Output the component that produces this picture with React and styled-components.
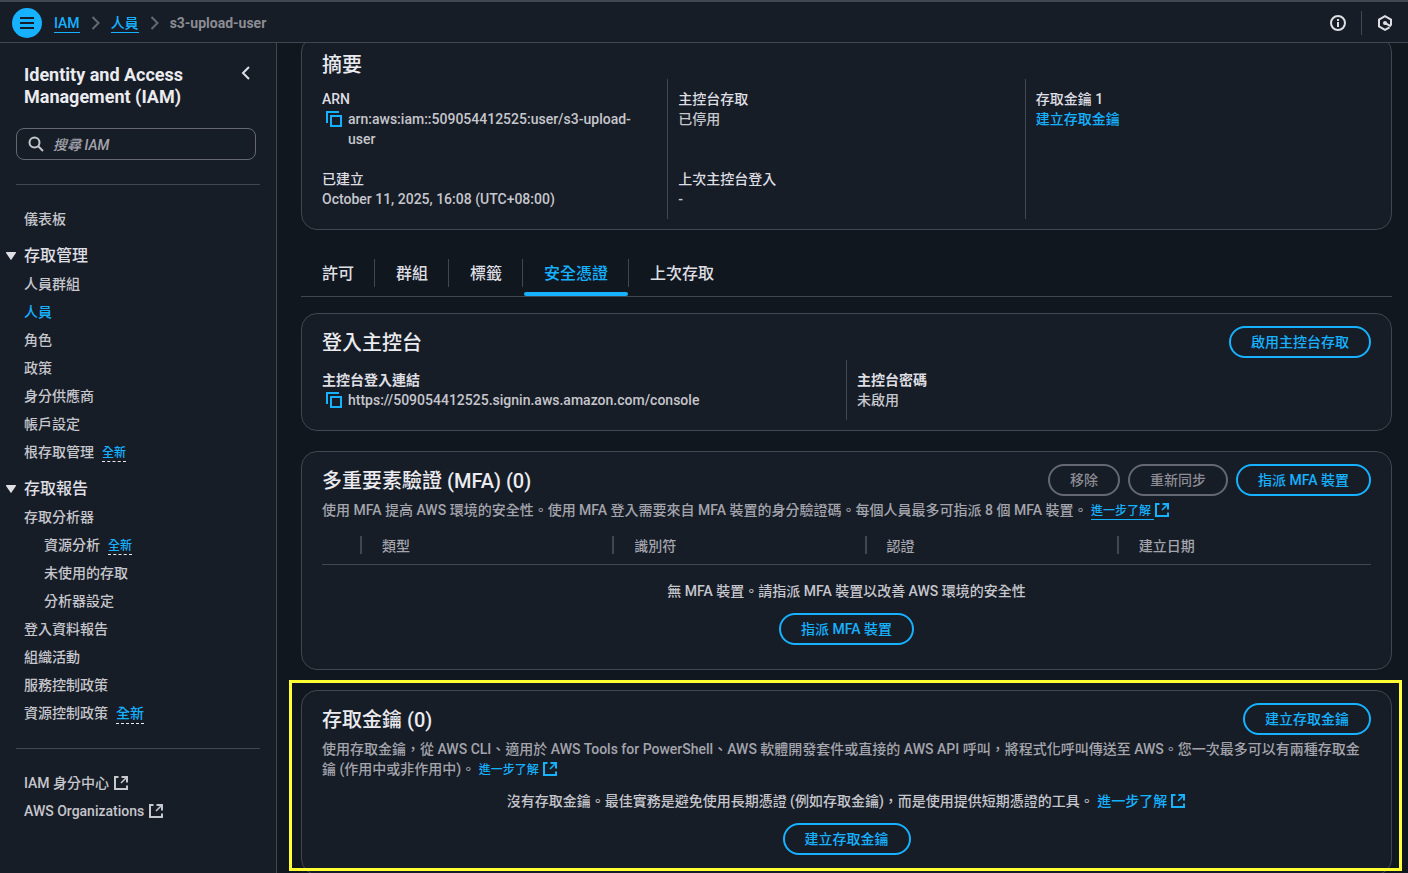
import React from 'react';
import styled, { createGlobalStyle } from 'styled-components';

const color = {
  page: '#10171e',
  surface: '#161d26',
  line: '#424650',
  control: '#656871',
  link: '#16b1ff',
  heading: '#ebebf0',
  label: '#dedee3',
  body: '#c6c6cd',
  muted: '#a4a4ad',
  disabled: '#8c8c94',
  highlight: '#ffff33',
};

const GlobalStyle = createGlobalStyle`
  *, *::before, *::after { box-sizing: border-box; }
  body {
    margin: 0;
    background: ${color.page};
    color: ${color.body};
    font: 500 14px/20px Roboto, "Noto Sans CJK TC", sans-serif;
  }
  button, input { font: inherit; }
`;

const Shell = styled.div`
  display: grid;
  grid-template: auto minmax(0, 1fr) / 277px minmax(0, 1fr);
  height: 100vh;
`;

const TopBar = styled.header`
  grid-column: 1 / -1;
  z-index: 1;
  display: flex;
  align-items: center;
  justify-content: space-between;
  height: 43px;
  padding: 2px 15px 0 12px;
  border-top: 2px solid ${color.line};
  border-bottom: 1px solid ${color.line};
  background: ${color.surface};
`;

const BarGroup = styled.div`
  display: flex;
  align-items: center;
  gap: ${(p) => p.$gap};
`;

const MenuButton = styled.button`
  display: grid;
  place-items: center;
  width: 30px;
  height: 30px;
  padding: 0;
  border: 0;
  border-radius: 50%;
  background: ${color.link};
  color: ${color.surface};
`;

const IconButton = styled.button`
  display: grid;
  place-items: center;
  flex: none;
  width: 16px;
  height: 16px;
  padding: 0;
  border: 0;
  background: none;
  color: ${(p) => (p.$accent ? color.link : color.label)};
`;

const BarRule = styled.span`
  width: 1px;
  height: 24px;
  background: ${color.line};
`;

const Crumbs = styled.ol`
  display: flex;
  align-items: center;
  gap: 11px;
  margin: 0;
  padding: 0;
  list-style: none;
  color: ${color.disabled};
`;

const Crumb = styled.li`
  display: flex;
  align-items: center;
  gap: 11px;
  font-weight: ${(p) => (p.$current ? 700 : 500)};
`;

const CrumbLink = styled.a`
  padding-top: 1px;
  border-bottom: 1px solid ${color.link};
  color: ${color.link};
  line-height: 18px;
  text-decoration: none;
`;

const Sidebar = styled.nav`
  padding: 21px 16px 20px;
  border-right: 1px solid ${color.line};
  background: ${color.surface};
  overflow: hidden;
`;

const SideHeader = styled.div`
  display: flex;
  justify-content: space-between;
  align-items: flex-start;
  gap: 40px;
  margin-bottom: 20px;
  padding: 0 6px 0 8px;
`;

const SideTitle = styled.h2`
  margin: 0;
  color: ${color.heading};
  font-size: 18px;
  font-weight: 700;
  line-height: 22px;
`;

const SearchBox = styled.label`
  display: flex;
  align-items: center;
  gap: 9px;
  height: 32px;
  margin-right: 4px;
  padding: 0 11px;
  border: 1px solid ${color.control};
  border-radius: 8px;
  color: ${color.body};
`;

const SearchInput = styled.input`
  flex: 1;
  min-width: 0;
  padding: 2px 0 0;
  border: 0;
  outline: 0;
  background: none;
  color: ${color.body};
  &::placeholder {
    color: ${color.muted};
    font-style: italic;
    opacity: 1;
  }
`;

const SideRule = styled.hr`
  height: 1px;
  margin: ${(p) => (p.$first ? '24px' : '21px')} 0 20px;
  border: 0;
  background: ${color.line};
`;

const NavList = styled.ul`
  margin: 0;
  padding: 0 0 0 ${(p) => (p.$nested ? '20px' : '8px')};
  list-style: none;
`;

const NavItem = styled.li`
  display: flex;
  align-items: center;
  gap: 8px;
  height: 28px;
`;

const NavLink = styled.a`
  display: inline-flex;
  align-items: center;
  gap: 4px;
  color: ${(p) => (p.$active ? color.link : color.body)};
  text-decoration: none;
`;

const NewTag = styled.a`
  padding-top: ${(p) => (p.$large ? '0' : '3px')};
  border-bottom: 1px dashed ${color.heading};
  color: ${color.link};
  font-size: ${(p) => (p.$large ? '14px' : '12px')};
  line-height: ${(p) => (p.$large ? '20px' : '16px')};
  text-decoration: none;
`;

const NavSection = styled.button`
  display: flex;
  align-items: center;
  gap: 8px;
  margin: 12px 0 3px -10px;
  padding: 0;
  border: 0;
  background: none;
  color: ${color.label};
  font-size: 16px;
  line-height: 22px;
`;

const Main = styled.main`
  padding: 0 16px 0 24px;
  overflow-y: auto;
  scrollbar-width: none;
`;

const Card = styled.section`
  position: relative;
  margin: ${(p) => p.$margin || '0 0 20px'};
  border: 1px solid ${color.line};
  border-radius: 16px;
  padding: 12px 20px ${(p) => p.$bottom || '10px'};
  background: ${color.surface};
`;

const CardHeader = styled.div`
  display: flex;
  align-items: center;
  justify-content: space-between;
  min-height: ${(p) => (p.$compact ? '30px' : '32px')};
  margin-bottom: ${(p) => p.$gap || '0'};
`;

const CardTitle = styled.h2`
  margin: 0;
  padding-top: 2px;
  color: ${color.heading};
  font-size: 20px;
  font-weight: 500;
  line-height: 24px;
`;

const Actions = styled.div`
  display: flex;
  gap: 8px;
`;

const PillButton = styled.button`
  height: 32px;
  padding: 0 20px;
  border: 2px solid ${color.link};
  border-radius: 20px;
  background: none;
  color: ${color.link};
  line-height: 20px;
  white-space: nowrap;
  &:disabled {
    border-color: ${color.control};
    color: ${color.disabled};
  }
`;

const Columns = styled.div`
  display: grid;
  grid-template-columns: repeat(${(p) => p.$count}, minmax(0, 1fr));
  margin: 0 -11px 0 -12px;
`;

const Column = styled.dl`
  display: flex;
  flex-direction: column;
  gap: 20px;
  margin: 0;
  padding: 10px 20px 10px 10px;
  border-left: 1px solid ${color.line};
  &:first-child {
    padding-left: 11px;
    border-color: transparent;
  }
`;

const Field = styled.div`
  min-height: ${(p) => (p.$tall ? '60px' : '40px')};
`;

const Term = styled.dt`
  color: ${color.label};
  font-weight: ${(p) => (p.$strong ? 700 : 500)};
`;

const Value = styled.dd`
  display: flex;
  gap: 6px;
  margin: 0;
  padding-left: ${(p) => (p.$copy ? '4px' : '0')};
`;

const CopyButton = styled(IconButton)`
  margin-top: 2px;
`;

const Link = styled.a`
  color: ${color.link};
  font-size: ${(p) => (p.$small ? '12px' : '14px')};
  line-height: ${(p) => (p.$small ? '16px' : '20px')};
  text-decoration: none;
  white-space: nowrap;
  svg {
    margin-top: 2px;
    vertical-align: top;
  }
`;

const LinkText = styled.span`
  padding-right: 3px;
  padding-bottom: 1px;
  border-bottom: ${(p) => (p.$underlined ? `1px solid ${color.link}` : '0')};
`;

const Tabs = styled.div`
  display: flex;
  margin-bottom: 16px;
  border-bottom: 1px solid ${color.line};
`;

const Tab = styled.button`
  position: relative;
  height: 46px;
  padding: 2px 21px 0;
  border: 0;
  background: none;
  color: ${(p) => (p.$active ? color.link : color.label)};
  font-size: 16px;
  &:not(:last-child)::after {
    content: '';
    position: absolute;
    top: 9px;
    right: 0;
    width: 1px;
    height: 28px;
    background: ${color.line};
  }
  &::before {
    content: '';
    display: ${(p) => (p.$active ? 'block' : 'none')};
    position: absolute;
    left: 1px;
    right: 1px;
    bottom: 0;
    height: 4px;
    border-radius: 2px;
    background: ${color.link};
  }
`;

const Description = styled.p`
  margin: 0;
  color: ${color.muted};
`;

const Table = styled.table`
  width: 100%;
  margin-top: 7px;
  border-collapse: collapse;
  table-layout: fixed;
`;

const HeadCell = styled.th`
  width: ${(p) => (p.$select ? '40px' : 'auto')};
  height: 37px;
  padding: 0;
  border-bottom: 1px solid ${color.line};
  color: ${color.muted};
  font-weight: 500;
  text-align: left;
`;

const HeadLabel = styled.span`
  display: block;
  height: 18px;
  padding-left: 20px;
  border-right: ${(p) => (p.$last ? '0' : `2px solid ${color.line}`)};
  line-height: 20px;
`;

const Empty = styled.div`
  display: flex;
  flex-direction: column;
  align-items: center;
  gap: 12px;
  padding-top: ${(p) => p.$top};
  color: ${color.body};
  text-align: center;
`;

const EmptyCell = styled.td`
  padding: 0;
`;

const Highlight = styled.div`
  position: absolute;
  inset: -11px -11px 3px -13px;
  border: 3px solid ${color.highlight};
  pointer-events: none;
`;

const Icon = ({ size = 16, width = 2, children }) => (
  <svg width={size} height={size} viewBox="0 0 16 16" fill="none" stroke="currentColor" strokeWidth={width} aria-hidden="true">
    {children}
  </svg>
);

const ExternalIcon = () => (
  <Icon>
    <path d="M5.500 2H2v12h12v-3.500" />
    <path d="M8.500 2H14v5.500" />
    <path d="M13.500 2.500 8 8" strokeWidth="1.600" />
  </Icon>
);

const CopyIcon = () => (
  <Icon>
    <path d="M1 12V1h12" />
    <path d="M5 5h10v10H5z" />
  </Icon>
);

const Caret = () => (
  <svg width="10" height="8" viewBox="0 0 10 8" fill="currentColor" aria-hidden="true">
    <path d="M.6 0h8.800a.6.6 0 0 1 .5.900L5.500 7.600a.6.6 0 0 1-1 0L.1.900A.6.6 0 0 1 .6 0z" />
  </svg>
);

const Chevron = () => (
  <svg width="9" height="14" viewBox="0 0 9 14" fill="none" stroke={color.control} strokeWidth="2" aria-hidden="true">
    <path d="M1.500 1 7.500 7l-6 6" />
  </svg>
);

const LearnMore = ({ small, underlined }) => (
  <Link href="#learn" $small={small}>
    <LinkText $underlined={underlined}>進一步了解</LinkText>
    <ExternalIcon />
  </Link>
);

const NavRow = ({ label, active, tag, external }) => (
  <NavItem>
    <NavLink href="#nav" $active={active}>
      {label}
      {external && <ExternalIcon />}
    </NavLink>
    {tag && <NewTag href="#new" $large={tag === 'large'}>全新</NewTag>}
  </NavItem>
);

const Section = ({ title, children }) => (
  <>
    <NavSection type="button" aria-expanded="true">
      <Caret />
      {title}
    </NavSection>
    {children}
  </>
);

const CopyValue = ({ children }) => (
  <Value $copy>
    <CopyButton type="button" aria-label="複製" $accent>
      <CopyIcon />
    </CopyButton>
    <span>{children}</span>
  </Value>
);

const tabs = ['許可', '群組', '標籤', '安全憑證', '上次存取'];
const mfaColumns = ['類型', '識別符', '認證', '建立日期'];

export default function App() {
  return (
    <Shell lang="zh-TW">
      <GlobalStyle />
      <TopBar>
        <BarGroup $gap="12px">
          <MenuButton type="button" aria-label="選單">
            <Icon>
              <path d="M1 3h14M1 8h14M1 13h14" />
            </Icon>
          </MenuButton>
          <Crumbs>
            <Crumb><CrumbLink href="#iam">IAM</CrumbLink><Chevron /></Crumb>
            <Crumb><CrumbLink href="#users">人員</CrumbLink><Chevron /></Crumb>
            <Crumb $current>s3-upload-user</Crumb>
          </Crumbs>
        </BarGroup>
        <BarGroup $gap="15px">
          <IconButton type="button" aria-label="資訊">
            <Icon>
              <circle cx="8" cy="8" r="7" />
              <path d="M8 7v5M8 4v2" />
            </Icon>
          </IconButton>
          <BarRule />
          <IconButton type="button" aria-label="CloudShell">
            <Icon>
              <path d="M14 10.500v-6L8 1.200 2 4.500v7l6 3.300 4.500-2.500" />
              <circle cx="8" cy="8" r="2" fill="currentColor" stroke="none" />
              <path d="m8 8 6 3.300" />
            </Icon>
          </IconButton>
        </BarGroup>
      </TopBar>

      <Sidebar>
        <SideHeader>
          <SideTitle>Identity and Access Management (IAM)</SideTitle>
          <IconButton type="button" aria-label="收合">
            <Icon><path d="M11 3 5 9l6 6" /></Icon>
          </IconButton>
        </SideHeader>
        <SearchBox>
          <Icon>
            <circle cx="6.500" cy="6.500" r="5" />
            <path d="m10 10 5 5" />
          </Icon>
          <SearchInput type="search" placeholder="搜尋 IAM" aria-label="搜尋 IAM" />
        </SearchBox>
        <SideRule $first />
        <NavList><NavRow label="儀表板" /></NavList>
        <Section title="存取管理">
          <NavList>
            <NavRow label="人員群組" />
            <NavRow label="人員" active />
            <NavRow label="角色" />
            <NavRow label="政策" />
            <NavRow label="身分供應商" />
            <NavRow label="帳戶設定" />
            <NavRow label="根存取管理" tag="small" />
          </NavList>
        </Section>
        <Section title="存取報告">
          <NavList>
            <NavRow label="存取分析器" />
            <li>
              <NavList $nested>
                <NavRow label="資源分析" tag="small" />
                <NavRow label="未使用的存取" />
                <NavRow label="分析器設定" />
              </NavList>
            </li>
            <NavRow label="登入資料報告" />
            <NavRow label="組織活動" />
            <NavRow label="服務控制政策" />
            <NavRow label="資源控制政策" tag="large" />
          </NavList>
        </Section>
        <SideRule />
        <NavList>
          <NavRow label="IAM 身分中心" external />
          <NavRow label="AWS Organizations" external />
        </NavList>
      </Sidebar>

      <Main>
        <Card $margin="-7px 0 20px">
          <CardHeader $compact><CardTitle>摘要</CardTitle></CardHeader>
          <Columns $count={3}>
            <Column>
              <Field $tall>
                <Term>ARN</Term>
                <CopyValue>arn:aws:iam::509054412525:user/s3-upload-user</CopyValue>
              </Field>
              <Field>
                <Term>已建立</Term>
                <Value>October 11, 2025, 16:08 (UTC+08:00)</Value>
              </Field>
            </Column>
            <Column>
              <Field $tall>
                <Term>主控台存取</Term>
                <Value>已停用</Value>
              </Field>
              <Field>
                <Term>上次主控台登入</Term>
                <Value>-</Value>
              </Field>
            </Column>
            <Column>
              <Field>
                <Term>存取金鑰 1</Term>
                <Value><Link href="#create">建立存取金鑰</Link></Value>
              </Field>
            </Column>
          </Columns>
        </Card>

        <Tabs role="tablist">
          {tabs.map((t) => (
            <Tab key={t} type="button" role="tab" aria-selected={t === '安全憑證'} $active={t === '安全憑證'}>{t}</Tab>
          ))}
        </Tabs>

        <Card>
          <CardHeader $gap="2px">
            <CardTitle>登入主控台</CardTitle>
            <PillButton type="button">啟用主控台存取</PillButton>
          </CardHeader>
          <Columns $count={2}>
            <Column>
              <Field>
                <Term $strong>主控台登入連結</Term>
                <CopyValue>https://509054412525.signin.aws.amazon.com/console</CopyValue>
              </Field>
            </Column>
            <Column>
              <Field>
                <Term $strong>主控台密碼</Term>
                <Value>未啟用</Value>
              </Field>
            </Column>
          </Columns>
        </Card>

        <Card $bottom="24px">
          <CardHeader $gap="4px">
            <CardTitle>多重要素驗證 (MFA) (0)</CardTitle>
            <Actions>
              <PillButton type="button" disabled>移除</PillButton>
              <PillButton type="button" disabled>重新同步</PillButton>
              <PillButton type="button">指派 MFA 裝置</PillButton>
            </Actions>
          </CardHeader>
          <Description>
            使用 MFA 提高 AWS 環境的安全性。使用 MFA 登入需要來自 MFA 裝置的身分驗證碼。每個人員最多可指派 8 個 MFA 裝置。 <LearnMore small underlined />
          </Description>
          <Table>
            <thead>
              <tr>
                <HeadCell $select aria-label="選取"><HeadLabel /></HeadCell>
                {mfaColumns.map((c, i) => (
                  <HeadCell key={c} scope="col">
                    <HeadLabel $last={i === mfaColumns.length - 1}>{c}</HeadLabel>
                  </HeadCell>
                ))}
              </tr>
            </thead>
            <tbody>
              <tr>
                <EmptyCell colSpan={5}>
                  <Empty $top="16px">
                    <span>無 MFA 裝置。請指派 MFA 裝置以改善 AWS 環境的安全性</span>
                    <PillButton type="button">指派 MFA 裝置</PillButton>
                  </Empty>
                </EmptyCell>
              </tr>
            </tbody>
          </Table>
        </Card>

        <Card $bottom="19px">
          <CardHeader $gap="4px">
            <CardTitle>存取金鑰 (0)</CardTitle>
            <PillButton type="button">建立存取金鑰</PillButton>
          </CardHeader>
          <Description>
            使用存取金鑰，從 AWS CLI、適用於 AWS Tools for PowerShell、AWS 軟體開發套件或直接的 AWS API 呼叫，將程式化呼叫傳送至 AWS。您一次最多可以有兩種存取金鑰 (作用中或非作用中)。 <LearnMore small />
          </Description>
          <Empty $top="12px">
            <span>沒有存取金鑰。最佳實務是避免使用長期憑證 (例如存取金鑰)，而是使用提供短期憑證的工具。 <LearnMore /></span>
            <PillButton type="button">建立存取金鑰</PillButton>
          </Empty>
          <Highlight />
        </Card>
      </Main>
    </Shell>
  );
}
